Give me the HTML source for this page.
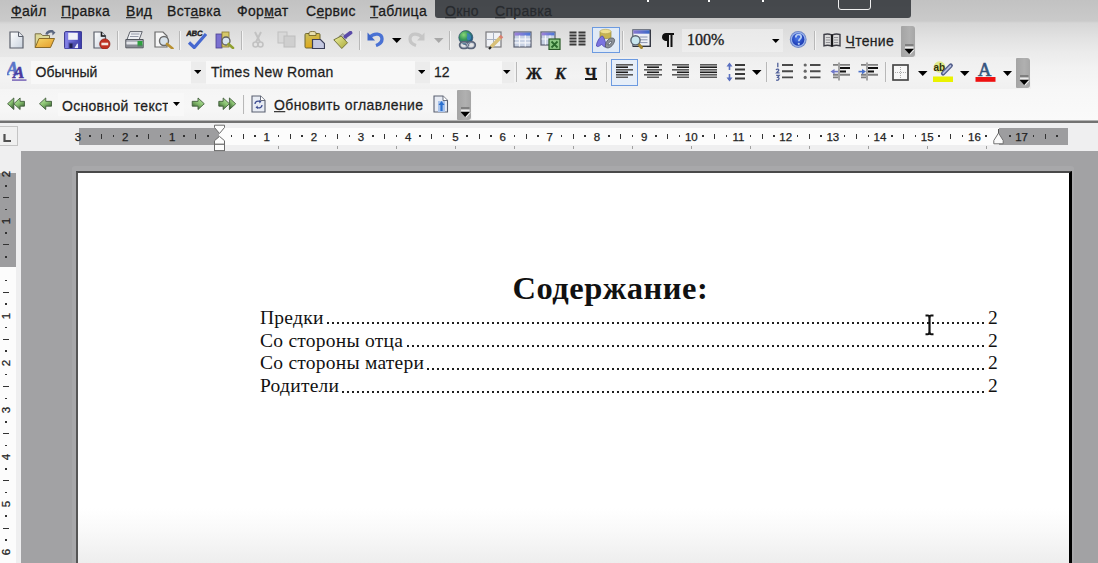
<!DOCTYPE html><html><head><meta charset="utf-8"><style>
*{margin:0;padding:0;box-sizing:border-box}
html,body{width:1098px;height:563px;overflow:hidden;background:#a2a2a4;font-family:"Liberation Sans",sans-serif;position:relative}
.a{position:absolute;display:block}
.t{position:absolute;white-space:nowrap;line-height:1;-webkit-text-stroke:0.25px currentColor;transform:scaleY(1.1);transform-origin:0 1.6px}
.sep{position:absolute;width:2px;border-left:1px solid #b8b8b8;border-right:1px solid #f4f4f4}
.handle{background:linear-gradient(90deg,#a4a4a4,#b0b0b0 60%,#a6a6a6);border-radius:1px 3px 3px 1px}
u{text-decoration:underline;text-underline-offset:1px;text-decoration-thickness:1px}
.rn{position:absolute;top:129px;width:20px;text-align:center;font-size:11.5px;color:#222;-webkit-text-stroke:0.25px #222;line-height:16px}
.rd{position:absolute;top:135px;width:1.5px;height:1.5px;background:#333}
.rt{position:absolute;top:133.5px;width:1px;height:5px;background:#333}
.vn{position:absolute;left:0;width:16px;height:20px;text-align:center;font-size:11.5px;color:#222;-webkit-text-stroke:0.25px #222;line-height:16px;transform:rotate(-90deg)}
.vd{position:absolute;left:5.3px;width:1.5px;height:1.5px;background:#333}
.vt{position:absolute;left:3px;width:6px;height:1px;background:#333}
.doc{position:absolute;font-family:"Liberation Serif",serif;font-size:19.5px;letter-spacing:0.25px;color:#111;white-space:nowrap;line-height:1}
</style></head><body>
<div class="a" style="left:0;top:0;width:1098px;height:121px;background:linear-gradient(#c2c2c2 0px,#cacaca 21px,#d6d6d6 23px,#e2e2e2 38px,#ebebeb 52px,#f2f2f2 68px,#f7f7f7 90px,#fafafa 120px)"></div>
<div class="a" style="left:0;top:24px;width:916px;height:33px;background:linear-gradient(#d9d9d9,#e4e4e4 60%,#e8e8e8)"></div>
<div class="a" style="left:0;top:57px;width:1031px;height:32px;background:linear-gradient(#efefef,#f3f3f3 60%,#f0f0f0)"></div>
<div class="a" style="left:0;top:89px;width:472px;height:31px;background:linear-gradient(#f5f5f5,#f7f7f7 60%,#f3f3f3)"></div>
<span class="t" style="left:11px;top:2.5px;font-size:14px;letter-spacing:0.3px;color:#1a1a1a;"><u>Ф</u>айл</span>
<span class="t" style="left:61px;top:2.5px;font-size:14px;letter-spacing:0.3px;color:#1a1a1a;"><u>П</u>равка</span>
<span class="t" style="left:126px;top:2.5px;font-size:14px;letter-spacing:0.3px;color:#1a1a1a;"><u>В</u>ид</span>
<span class="t" style="left:167px;top:2.5px;font-size:14px;letter-spacing:0.3px;color:#1a1a1a;">Вст<u>а</u>вка</span>
<span class="t" style="left:237px;top:2.5px;font-size:14px;letter-spacing:0.3px;color:#1a1a1a;">Фор<u>м</u>ат</span>
<span class="t" style="left:306px;top:2.5px;font-size:14px;letter-spacing:0.3px;color:#1a1a1a;">С<u>е</u>рвис</span>
<span class="t" style="left:370px;top:2.5px;font-size:14px;letter-spacing:0.3px;color:#1a1a1a;"><u>Т</u>аблица</span>
<span class="t" style="left:445px;top:2.5px;font-size:14px;letter-spacing:0.3px;color:#1a1a1a;"><u>О</u>кно</span>
<span class="t" style="left:495px;top:2.5px;font-size:14px;letter-spacing:0.3px;color:#1a1a1a;"><u>С</u>правка</span>
<div class="a" style="left:435px;top:0;width:476px;height:17.5px;background:rgba(42,45,50,0.82);border-radius:0 0 3px 3px"></div>
<i class="a" style="left:647px;top:0;width:2px;height:2px;background:#fff"></i>
<i class="a" style="left:708px;top:0;width:2px;height:2px;background:#fff"></i>
<i class="a" style="left:762px;top:0;width:2px;height:2px;background:#fff"></i>
<div class="a" style="left:838px;top:-4px;width:33px;height:14px;border:1.5px solid #f0f0f0;border-radius:3px"></div>
<svg class="a" style="left:9px;top:31px" width="15" height="18" viewBox="0 0 15 18"><defs><linearGradient id="gpg" x1="0" y1="0" x2="1" y2="1"><stop offset="0" stop-color="#fff"/><stop offset="1" stop-color="#c9d2de"/></linearGradient></defs><path d="M1 1H9.5L14 5.5V17H1Z" fill="url(#gpg)" stroke="#5a5f6a" stroke-width="1.2"/><path d="M9.5 1V5.5H14" fill="#e8ecf2" stroke="#5a5f6a" stroke-width="1"/></svg>
<svg class="a" style="left:34px;top:30px" width="22" height="19" viewBox="0 0 22 19"><defs><linearGradient id="gfold" x1="0" y1="0" x2="1" y2="1"><stop offset="0" stop-color="#f6d868"/><stop offset="1" stop-color="#e49a28"/></linearGradient></defs><path d="M1.2 3.8H7L8.5 5.5H15.5V17.5H1.2Z" fill="#dcd898" stroke="#7a7048" stroke-width="1"/><path d="M1.2 17.5L5 8.5H20.5L16.5 17.5Z" fill="url(#gfold)" stroke="#8a6a28" stroke-width="1"/><path d="M12.5 4.5C13 2 16 0.6 19 1.6" fill="none" stroke="#5a6680" stroke-width="2.6"/><path d="M18 0L21.5 2.5L18.5 5.5Z" fill="#5a6680"/></svg>
<svg class="a" style="left:63.5px;top:30.5px" width="18.5" height="18.5" viewBox="0 0 18.5 18.5"><defs><linearGradient id="gsave" x1="0" y1="0" x2="1" y2="0"><stop offset="0" stop-color="#8a88ec"/><stop offset="1" stop-color="#3a3aa8"/></linearGradient></defs><rect x="0.6" y="0.6" width="17.3" height="17.3" rx="1.2" fill="url(#gsave)" stroke="#34328a" stroke-width="1"/><rect x="4.2" y="1.8" width="9.6" height="7" fill="#f0f0f8"/><path d="M4.5 11.5H14V18H4.5Z" fill="#5050b0"/><path d="M5.5 12.5H8.5V17H5.5Z" fill="#202050"/><path d="M10.5 17L13 12.8H14V17Z" fill="#e8e8f8"/></svg>
<svg class="a" style="left:93px;top:31px" width="18" height="18" viewBox="0 0 18 18"><path d="M1 1H8.5L12.5 5V17H1Z" fill="url(#gpg)" stroke="#5a5f6a" stroke-width="1.2"/><path d="M8.5 1V5H12.5" fill="#e8ecf2" stroke="#5a5f6a" stroke-width="1"/><path d="M8.5 1V5H12.5" fill="none" stroke="#202020" stroke-width="1.6"/><circle cx="11.8" cy="13" r="5.2" fill="#c03222" stroke="#801a10" stroke-width="0.6"/><rect x="8.4" y="11.7" width="6.8" height="2.6" fill="#f4e8e0"/></svg>
<i class="sep" style="left:117px;top:31px;height:19px"></i>
<svg class="a" style="left:125px;top:31px" width="19" height="18" viewBox="0 0 19 18"><path d="M5 0.6H17.2L14 9H1.8Z" fill="#eef0f4" stroke="#60646c" stroke-width="1"/><path d="M6 3H14.5M5 5.5H13.5" stroke="#8a90a0" stroke-width="0.9"/><path d="M0.8 8.5H18.2V16.8H0.8Z" fill="#a8acb4" stroke="#50545c" stroke-width="1"/><path d="M1.5 10.8H17.5V13.2H1.5Z" fill="#e4e6ea"/><rect x="12.5" y="10" width="5" height="5.5" fill="#2fa040"/><path d="M1.5 15H17.5" stroke="#6a6e76" stroke-width="1"/></svg>
<svg class="a" style="left:154px;top:31px" width="20" height="18" viewBox="0 0 20 18"><path d="M1 1H9L13 5V16H1Z" fill="#f6f6f6" stroke="#6a6a6a" stroke-width="1.2"/><circle cx="10" cy="10" r="4.5" fill="#d8e2ea" stroke="#6a6a6a" stroke-width="1.4"/><path d="M13 13L18.5 17.5" stroke="#b89030" stroke-width="2.6" stroke-linecap="round"/></svg>
<i class="sep" style="left:179px;top:31px;height:19px"></i>
<svg class="a" style="left:186px;top:30px" width="21" height="19" viewBox="0 0 21 19"><text x="0.8" y="6.3" font-family="Liberation Sans" font-weight="bold" font-size="7.8" fill="#1a1a1a" stroke="#1a1a1a" stroke-width="0.35" letter-spacing="-0.2" transform="skewX(-8)">ABC</text><path d="M3 12.5L8.3 17.5L20 4" fill="none" stroke="#4668d0" stroke-width="3.2" stroke-linejoin="round"/></svg>
<svg class="a" style="left:215px;top:31px" width="20" height="18" viewBox="0 0 20 18"><rect x="1" y="3" width="6" height="14" fill="#7a70d0" stroke="#4a4090" stroke-width="0.8"/><rect x="7" y="1" width="7" height="15" fill="#d6c86a" stroke="#8a7a30" stroke-width="0.8"/><circle cx="11" cy="10" r="4" fill="#d8e4f0" stroke="#606060" stroke-width="1.3"/><path d="M13.5 13L18 17" stroke="#90a030" stroke-width="2.6" stroke-linecap="round"/></svg>
<i class="sep" style="left:241px;top:31px;height:19px"></i>
<svg class="a" style="left:252px;top:31px" width="12" height="17" viewBox="0 0 12 17"><path d="M3 1L8 11M9 1L4 11" stroke="#c2c2c2" stroke-width="2"/><circle cx="3.5" cy="13.5" r="2.5" fill="none" stroke="#c2c2c2" stroke-width="1.6"/><circle cx="8.5" cy="13.5" r="2.5" fill="none" stroke="#c2c2c2" stroke-width="1.6"/></svg>
<svg class="a" style="left:277px;top:31px" width="19" height="17" viewBox="0 0 19 17"><rect x="1" y="1" width="9" height="11" fill="#d8d8d8" stroke="#c0c0c0"/><rect x="7" y="5" width="11" height="11" fill="#cfcfcf" stroke="#bdbdbd"/></svg>
<svg class="a" style="left:304px;top:31px" width="21" height="18" viewBox="0 0 21 18"><defs><linearGradient id="gpaste" x1="0" y1="0" x2="0.3" y2="1"><stop offset="0" stop-color="#c8c060"/><stop offset="1" stop-color="#e0a818"/></linearGradient><linearGradient id="gfp" x1="0" y1="0" x2="1" y2="1"><stop offset="0" stop-color="#eef0a0"/><stop offset="1" stop-color="#a8a838"/></linearGradient></defs><rect x="1" y="2.5" width="15" height="14.5" rx="1.2" fill="url(#gpaste)" stroke="#6e6630" stroke-width="1"/><path d="M5 4.5V2C5 1 6 0.5 8.5 0.5C11 0.5 12 1 12 2V4.5Z" fill="#e8e0b0" stroke="#6a5a20" stroke-width="0.8"/><path d="M8.5 8.5H16.5L20.5 12.5V17.5H8.5Z" fill="#c4c8e0" stroke="#3a3e58" stroke-width="1.2"/></svg>
<svg class="a" style="left:333px;top:31px" width="20" height="18" viewBox="0 0 20 18"><path d="M6 5.5L10 2.5L13.8 7.2L9.8 10Z" fill="#b8b8c0" stroke="#707078" stroke-width="0.7"/><path d="M0.8 8.8L8.2 5L14.5 11.8L8.8 17.5Z" fill="url(#gfp)" stroke="#6a6a30" stroke-width="0.9"/><path d="M12.5 5.5L17.5 1.8" stroke="#5a4aa8" stroke-width="3.8" stroke-linecap="round"/></svg>
<i class="sep" style="left:359px;top:31px;height:19px"></i>
<svg class="a" style="left:367px;top:31px" width="17" height="16" viewBox="0 0 17 16"><path d="M2.5 6.5C7 1.5 15 2 15 8C15 11.5 12 13.5 9 14.5" fill="none" stroke="#4a72d4" stroke-width="3.4"/><path d="M0.5 1.5V9.5H8Z" fill="#3e66c8"/></svg>
<svg class="a" style="left:392px;top:38px" width="9.5" height="5" viewBox="0 0 9.5 5"><path d="M0 0H9.5L4.75 5Z" fill="#000"/></svg>
<svg class="a" style="left:408px;top:31px" width="17" height="16" viewBox="0 0 17 16"><path d="M14.5 6.5C10 1.5 2 2 2 8C2 11.5 5 13.5 8 14.5" fill="none" stroke="#c6c6c6" stroke-width="3.2"/><path d="M16.5 1.5V9.5H9Z" fill="#c6c6c6"/></svg>
<svg class="a" style="left:434px;top:38px" width="9.5" height="5" viewBox="0 0 9.5 5"><path d="M0 0H9.5L4.75 5Z" fill="#a8a8a8"/></svg>
<i class="sep" style="left:449px;top:31px;height:19px"></i>
<svg class="a" style="left:457px;top:30px" width="20" height="20" viewBox="0 0 20 20"><defs><radialGradient id="gglobe" cx="0.35" cy="0.3" r="0.75"><stop offset="0" stop-color="#8ad878"/><stop offset="0.45" stop-color="#3a9a58"/><stop offset="1" stop-color="#1a4a90"/></radialGradient></defs><circle cx="8.8" cy="7.6" r="7" fill="url(#gglobe)" stroke="#2a4a6a" stroke-width="0.7"/><path d="M9.5 3C12 2.5 14.5 5 14 8C13.5 10.5 11 11 10 9C9 7 11.5 6 9.5 3Z" fill="#3a80c8" opacity="0.8"/><rect x="2.8" y="12" width="8.5" height="6.2" rx="3.1" fill="none" stroke="#5a6478" stroke-width="2.1"/><rect x="9.6" y="12" width="8.5" height="6.2" rx="3.1" fill="none" stroke="#5a6478" stroke-width="2.1"/><rect x="3.8" y="13" width="6.5" height="4.2" rx="2.1" fill="none" stroke="#c0c8d8" stroke-width="0.7"/><rect x="10.6" y="13" width="6.5" height="4.2" rx="2.1" fill="none" stroke="#c0c8d8" stroke-width="0.7"/></svg>
<svg class="a" style="left:485px;top:31px" width="19" height="19" viewBox="0 0 19 19"><rect x="1" y="1" width="15" height="15" fill="#f0f2f6" stroke="#7a7a7e" stroke-width="1.2"/><path d="M8.5 1V16M1 8.5H16" stroke="#a8b0c0" stroke-width="1"/><path d="M15.5 6.5L6 16" stroke="#d8c078" stroke-width="3.6"/><path d="M15 7L17 5" stroke="#d88070" stroke-width="3.6"/><path d="M6 16L4 18" stroke="#222" stroke-width="2.2"/></svg>
<svg class="a" style="left:513px;top:31px" width="19" height="17" viewBox="0 0 19 17"><defs><linearGradient id="gth" x1="0" x2="1"><stop offset="0" stop-color="#a080d8"/><stop offset="1" stop-color="#4a78d8"/></linearGradient></defs><rect x="1" y="1" width="17" height="15" fill="#c8d2e4" stroke="#5a6070" stroke-width="1.2"/><rect x="1.6" y="1.6" width="15.8" height="3" fill="url(#gth)"/><path d="M1.6 8.2H17.4M1.6 11.8H17.4M6.5 4.6V15.4M12.3 4.6V15.4" stroke="#f4f6fa" stroke-width="1.2"/></svg>
<svg class="a" style="left:540px;top:31px" width="21" height="19" viewBox="0 0 21 19"><rect x="1" y="1" width="14" height="13" fill="#c8d2e4" stroke="#5a6070" stroke-width="1.2"/><rect x="1.6" y="1.6" width="12.8" height="2.8" fill="url(#gth)"/><path d="M1.6 8H14.4M5.5 4.4V13.4M10 4.4V13.4" stroke="#f4f6fa" stroke-width="1.2"/><rect x="9" y="8" width="11" height="10.5" fill="#8cc884" stroke="#285a26" stroke-width="1.2"/><path d="M11.5 10.5L17.5 16.5M17.5 10.5L11.5 16.5" stroke="#2a6a2c" stroke-width="1.8"/></svg>
<svg class="a" style="left:569px;top:31px" width="17" height="16" viewBox="0 0 17 16"><path d="M0.5 1.5H7.5M9.5 1.5H16.5M0.5 4.5H7.5M9.5 4.5H16.5M0.5 7.5H7.5M9.5 7.5H16.5M0.5 10.5H7.5M9.5 10.5H16.5M0.5 13.5H7.5M9.5 13.5H16.5" stroke="#3a3a3a" stroke-width="2"/></svg>
<div class="a" style="left:592px;top:27px;width:28px;height:26px;background:#e0eaf6;border:1px solid #6c9ae0"></div>
<svg class="a" style="left:595px;top:28px" width="23" height="22" viewBox="0 0 23 22"><path d="M5 3.5V9.5C5 11 16 11 16 9.5V3.5" fill="#c8b450" stroke="#9a8a40" stroke-width="0.7"/><ellipse cx="10.5" cy="3.5" rx="5.5" ry="2.2" fill="#efe090" stroke="#b0a050" stroke-width="0.6"/><path d="M1.5 18C1 15 5 8.5 7 8C9 7.5 11 16 11.5 19C9.5 20 7.5 17 6.5 16.5C5 17.5 3 19.5 1.5 18Z" fill="#7a74e0" stroke="#4a44a8" stroke-width="0.8"/><path d="M10.5 19C10 15 13 10 17 10C20.5 10 20 13.5 18 16.5C16 19.5 12.5 21 10.5 19Z M13 17C13 15 15 13 16.5 13.5C17 15 15 17 13 17Z" fill="#8a9098" fill-rule="evenodd" stroke="#50565e" stroke-width="0.8"/></svg>
<i class="sep" style="left:622px;top:31px;height:19px"></i>
<svg class="a" style="left:629px;top:29px" width="23" height="21" viewBox="0 0 23 21"><defs><linearGradient id="gdm" x1="0" x2="1"><stop offset="0" stop-color="#8878d0"/><stop offset="1" stop-color="#3a68c8"/></linearGradient></defs><rect x="3.8" y="0.8" width="17.5" height="16.5" fill="#eef0f6" stroke="#50586a" stroke-width="1.1"/><rect x="4.3" y="1.3" width="16.5" height="3.4" fill="url(#gdm)"/><path d="M11 8H18.5M11 10.8H18.5M11 13.6H18.5" stroke="#8a94b0" stroke-width="1"/><path d="M21.3 1V17.3H4" fill="none" stroke="#30343e" stroke-width="1.2"/><path d="M9 14.5L12.5 18.5" stroke="#a88a30" stroke-width="3" stroke-linecap="round"/><circle cx="6.5" cy="11.3" r="4.6" fill="#c8e6ee" stroke="#5a6470" stroke-width="1.4"/></svg>
<svg class="a" style="left:661px;top:32px" width="14" height="16" viewBox="0 0 14 16"><path d="M5 1H13V3H11.5V15H9.5V3H8V15H6V9C2.5 9 1 7 1 5C1 2.5 3 1 5 1Z" fill="#111"/></svg>
<div class="a" style="left:682px;top:29px;width:101px;height:23px;background:linear-gradient(#e9e9e9,#eeeeee)"></div>
<span class="t" style="left:687px;top:32px;font-size:16px;letter-spacing:0px;color:#1e1e1e;font-family:'Liberation Serif';transform:none;-webkit-text-stroke:0.35px #1e1e1e">100%</span>
<svg class="a" style="left:772px;top:38.5px" width="7.5" height="4" viewBox="0 0 7.5 4"><path d="M0 0H7.5L3.75 4Z" fill="#000"/></svg>
<svg class="a" style="left:789px;top:30px" width="19" height="19" viewBox="0 0 19 19"><defs><radialGradient id="ghelp" cx="0.45" cy="0.4" r="0.6"><stop offset="0" stop-color="#4a78e8"/><stop offset="1" stop-color="#1a38b0"/></radialGradient></defs><circle cx="9.2" cy="9.5" r="8.4" fill="#7088c8"/><circle cx="9.2" cy="9.5" r="7.4" fill="#9ab4ec"/><circle cx="9.2" cy="9.5" r="6.2" fill="url(#ghelp)"/><path d="M6.8 7.4C6.8 5.3 8.2 4.5 9.5 4.5C11.2 4.5 12.2 5.6 12.2 7C12.2 8.8 9.8 9.2 9.8 11.2" fill="none" stroke="#b8d0f4" stroke-width="1.7"/><circle cx="9.8" cy="13.8" r="1.1" fill="#b8d0f4"/></svg>
<i class="sep" style="left:814px;top:31px;height:19px"></i>
<svg class="a" style="left:823px;top:33px" width="18" height="14" viewBox="0 0 18 14"><path d="M1 1.5C3.5 0.8 6 0.8 8.5 1.8V13C6 12 3.5 12 1 12.8Z" fill="#dcdcdc" stroke="#3e3e46" stroke-width="1.4"/><path d="M17 1.5C14.5 0.8 12 0.8 9.5 1.8V13C12 12 14.5 12 17 12.8Z" fill="#dcdcdc" stroke="#3e3e46" stroke-width="1.4"/><path d="M9 1.5V13.5" stroke="#111" stroke-width="1.6"/><path d="M2.8 4.5H7M2.8 7H7M2.8 9.5H7M11 4.5H15.2M11 7H15.2M11 9.5H15.2" stroke="#8a8a90" stroke-width="0.9"/></svg>
<span class="t" style="left:845.5px;top:33px;font-size:14px;letter-spacing:0.3px;color:#1e1e1e;"><u>Ч</u>тение</span>
<div class="a handle" style="left:901px;top:26px;width:14px;height:31px"></div><svg class="a" style="left:904px;top:44px" width="11" height="11" viewBox="0 0 11 11"><path d="M1 1H9.5" stroke="#707070" stroke-width="1.5"/><path d="M1 3.3H9.5" stroke="#f8f8f8" stroke-width="1.1"/><path d="M1.5 5.5H10.8L6.2 10.6Z" fill="#f4f4f4"/><path d="M0.6 5H9.8L5.2 9.9Z" fill="#000"/></svg>
<svg class="a" style="left:7px;top:60px" width="21" height="22" viewBox="0 0 21 22"><text x="-0.5" y="14.5" font-family="Liberation Serif" font-style="italic" font-weight="bold" font-size="18" fill="#5a74c8" stroke="#5a74c8" stroke-width="0.5">A</text><text x="6" y="17.5" font-family="Liberation Serif" font-style="italic" font-weight="bold" font-size="17" fill="#4a3aa0" stroke="#4a3aa0" stroke-width="0.5">A</text><rect x="5" y="19.2" width="14.5" height="1.8" fill="#8a7ac0"/></svg>
<div class="a" style="left:31px;top:61px;width:160px;height:23px;background:#f8f8f8"></div>
<div class="a" style="left:191px;top:62px;width:15px;height:21px;background:#ececec"></div>
<span class="t" style="left:35.5px;top:64px;font-size:14px;letter-spacing:0px;color:#1e1e1e;">Обычный</span>
<svg class="a" style="left:193.5px;top:70px" width="7.5" height="4" viewBox="0 0 7.5 4"><path d="M0 0H7.5L3.75 4Z" fill="#000"/></svg>
<div class="a" style="left:206px;top:61px;width:209px;height:23px;background:#f8f8f8"></div>
<div class="a" style="left:415px;top:62px;width:15px;height:21px;background:#ececec"></div>
<span class="t" style="left:211px;top:64px;font-size:14px;letter-spacing:0.27px;color:#1e1e1e;">Times New Roman</span>
<svg class="a" style="left:417.5px;top:70px" width="7.5" height="4" viewBox="0 0 7.5 4"><path d="M0 0H7.5L3.75 4Z" fill="#000"/></svg>
<div class="a" style="left:430px;top:61px;width:72px;height:23px;background:#f8f8f8"></div>
<div class="a" style="left:502px;top:62px;width:12px;height:21px;background:#ececec"></div>
<span class="t" style="left:434px;top:64px;font-size:14px;letter-spacing:0px;color:#1e1e1e;">12</span>
<svg class="a" style="left:503px;top:70px" width="7.5" height="4" viewBox="0 0 7.5 4"><path d="M0 0H7.5L3.75 4Z" fill="#000"/></svg>
<i class="sep" style="left:516px;top:62px;height:20px"></i>
<span class="t" style="left:526px;top:64.5px;font-size:16px;letter-spacing:0px;color:#1a1a1a;font-family:'Liberation Serif';font-weight:bold">Ж</span>
<span class="t" style="left:555px;top:64.5px;font-size:16px;letter-spacing:0px;color:#1a1a1a;font-family:'Liberation Serif';font-weight:bold;font-style:italic">К</span>
<span class="t" style="left:585px;top:64.5px;font-size:16px;letter-spacing:0px;color:#1a1a1a;font-family:'Liberation Serif';font-weight:bold">Ч</span>
<i class="a" style="left:585px;top:78px;width:12px;height:1.6px;background:#1a1a1a"></i>
<i class="sep" style="left:606px;top:62px;height:20px"></i>
<div class="a" style="left:611px;top:59px;width:27px;height:26.5px;background:#e6eef8;border:1px solid #6c9ae0"></div>
<svg class="a" style="left:615.5px;top:64px" width="17" height="14.1" viewBox="0 0 17 14.1"><rect x="0" y="0" width="17" height="1.6" fill="#5a5a5a"/><rect x="0" y="2.4" width="12" height="1.6" fill="#1e1e1e"/><rect x="0" y="5" width="17" height="1.6" fill="#5a5a5a"/><rect x="0" y="7.5" width="12" height="1.6" fill="#1e1e1e"/><rect x="0" y="10" width="17" height="1.6" fill="#5a5a5a"/><rect x="0" y="12.5" width="12" height="1.6" fill="#5a5a5a"/></svg>
<svg class="a" style="left:643.5px;top:64px" width="18" height="14.1" viewBox="0 0 18 14.1"><rect x="0" y="0" width="18" height="1.6" fill="#5a5a5a"/><rect x="3" y="2.4" width="12" height="1.6" fill="#1e1e1e"/><rect x="0" y="5" width="18" height="1.6" fill="#5a5a5a"/><rect x="3" y="7.5" width="12" height="1.6" fill="#1e1e1e"/><rect x="0" y="10" width="18" height="1.6" fill="#5a5a5a"/><rect x="3" y="12.5" width="12" height="1.6" fill="#5a5a5a"/></svg>
<svg class="a" style="left:671.5px;top:64px" width="17" height="14.1" viewBox="0 0 17 14.1"><rect x="0" y="0" width="17" height="1.6" fill="#5a5a5a"/><rect x="5" y="2.4" width="12" height="1.6" fill="#1e1e1e"/><rect x="0" y="5" width="17" height="1.6" fill="#5a5a5a"/><rect x="5" y="7.5" width="12" height="1.6" fill="#1e1e1e"/><rect x="0" y="10" width="17" height="1.6" fill="#5a5a5a"/><rect x="5" y="12.5" width="12" height="1.6" fill="#5a5a5a"/></svg>
<svg class="a" style="left:699.5px;top:64px" width="17.5" height="14.1" viewBox="0 0 17.5 14.1"><rect x="0" y="0" width="17.5" height="1.6" fill="#5a5a5a"/><rect x="0" y="2.4" width="17.5" height="1.6" fill="#1e1e1e"/><rect x="0" y="5" width="17.5" height="1.6" fill="#5a5a5a"/><rect x="0" y="7.5" width="17.5" height="1.6" fill="#1e1e1e"/><rect x="0" y="10" width="17.5" height="1.6" fill="#5a5a5a"/><rect x="0" y="12.5" width="17.5" height="1.6" fill="#5a5a5a"/></svg>
<svg class="a" style="left:726px;top:62px" width="20" height="20" viewBox="0 0 20 20"><path d="M3.5 2V8M3.5 12V18" stroke="#5a70c0" stroke-width="1.6"/><path d="M0.5 4.5L3.5 0.5L6.5 4.5Z M0.5 15.5L3.5 19.5L6.5 15.5Z" fill="#5a70c0"/><path d="M9 3H19M9 7.5H19M9 12H19M9 16.5H19" stroke="#3a3a3a" stroke-width="1.8"/></svg>
<svg class="a" style="left:752px;top:70px" width="9.5" height="5" viewBox="0 0 9.5 5"><path d="M0 0H9.5L4.75 5Z" fill="#000"/></svg>
<i class="sep" style="left:766px;top:62px;height:20px"></i>
<svg class="a" style="left:775px;top:62px" width="19" height="20" viewBox="0 0 19 20"><path d="M2.8 0.8V5.2M1 8C2 6.5 4.2 7 3.6 8.7L1.6 10.8H4.6M1.2 13.3H4.2L2.7 15.3C4.7 15.3 4.7 18.6 1.2 18.2" fill="none" stroke="#50609a" stroke-width="1.3"/><path d="M7 3H18M7 9.2H18M7 15.4H18" stroke="#4a4a4a" stroke-width="1.9"/></svg>
<svg class="a" style="left:803px;top:62px" width="18" height="20" viewBox="0 0 18 20"><circle cx="2.2" cy="3" r="1.6" fill="#666"/><circle cx="2.2" cy="9.2" r="1.6" fill="#666"/><circle cx="2.2" cy="15.4" r="1.6" fill="#666"/><path d="M7 3H17.5M7 9.2H17.5M7 15.4H17.5" stroke="#4a4a4a" stroke-width="1.9"/></svg>
<svg class="a" style="left:830px;top:62px" width="21" height="19" viewBox="0 0 21 19"><path d="M9 0.5V18.5" stroke="#444" stroke-width="0.9"/><path d="M3 2.8H8M10 2.8H20M3 12.75H8M10 12.75H20M3 15.4H8" stroke="#808080" stroke-width="1.8"/><path d="M10 6H20M10 9.6H16" stroke="#111" stroke-width="2"/><path d="M0.5 9.6L4.5 7V12.2Z" fill="#7078c8"/><path d="M4 9.6H8" stroke="#7078c8" stroke-width="1.6"/></svg>
<svg class="a" style="left:858px;top:62px" width="21" height="19" viewBox="0 0 21 19"><path d="M9 0.5V18.5" stroke="#444" stroke-width="0.9"/><path d="M3 2.8H8M10 2.8H20M3 12.75H8M10 12.75H20M3 15.4H8" stroke="#808080" stroke-width="1.8"/><path d="M10 6H20M10 9.6H16" stroke="#111" stroke-width="2"/><path d="M8 9.6L4 7V12.2Z" fill="#4a70c8"/><path d="M0.5 9.6H5" stroke="#4a70c8" stroke-width="1.6"/></svg>
<i class="sep" style="left:885px;top:62px;height:20px"></i>
<svg class="a" style="left:892px;top:64px" width="17" height="17" viewBox="0 0 17 17"><rect x="1" y="1" width="15" height="15" fill="#f8f8f8" stroke="#484848" stroke-width="1.7"/><path d="M8.5 3V14M3 8.5H14" stroke="#a0a0a0" stroke-width="0.9" stroke-dasharray="1 1"/></svg>
<svg class="a" style="left:918px;top:70.5px" width="9.5" height="5" viewBox="0 0 9.5 5"><path d="M0 0H9.5L4.75 5Z" fill="#000"/></svg>
<svg class="a" style="left:932px;top:61px" width="22" height="22" viewBox="0 0 22 22"><circle cx="7.5" cy="6" r="5.8" fill="#dce878" opacity="0.85"/><text x="1.5" y="10" font-family="Liberation Sans" font-weight="bold" font-size="10" fill="#30300a">ab</text><path d="M11 12.5L18.8 4.5" stroke="#505c88" stroke-width="4.2" stroke-linecap="round"/><path d="M11.3 12.2L18.5 4.8" stroke="#b4bce0" stroke-width="1.8" stroke-linecap="round"/><rect x="1" y="15.5" width="20" height="5.5" fill="#eaf200"/></svg>
<svg class="a" style="left:960px;top:70.5px" width="9.5" height="5" viewBox="0 0 9.5 5"><path d="M0 0H9.5L4.75 5Z" fill="#000"/></svg>
<svg class="a" style="left:975px;top:61px" width="21" height="21" viewBox="0 0 21 21"><defs><linearGradient id="gfa" x1="0" y1="0" x2="0" y2="1"><stop offset="0" stop-color="#3a4e88"/><stop offset="1" stop-color="#2a6a78"/></linearGradient></defs><text x="3" y="14.5" font-family="Liberation Serif" font-size="18.5" fill="url(#gfa)" stroke="#34507a" stroke-width="0.6">A</text><rect x="0.5" y="16" width="20" height="4.8" fill="#ee1010"/></svg>
<svg class="a" style="left:1002.5px;top:70.5px" width="9" height="5" viewBox="0 0 9 5"><path d="M0 0H9L4.5 5Z" fill="#000"/></svg>
<div class="a handle" style="left:1016px;top:58px;width:14px;height:30px"></div><svg class="a" style="left:1019px;top:75px" width="11" height="11" viewBox="0 0 11 11"><path d="M1 1H9.5" stroke="#707070" stroke-width="1.5"/><path d="M1 3.3H9.5" stroke="#f8f8f8" stroke-width="1.1"/><path d="M1.5 5.5H10.8L6.2 10.6Z" fill="#f4f4f4"/><path d="M0.6 5H9.8L5.2 9.9Z" fill="#000"/></svg>
<svg class="a" style="left:7px;top:97px" width="18.5" height="13.5" viewBox="0 0 19 14"><defs><linearGradient id="gar1" x1="0" y1="0" x2="0.7" y2="1"><stop offset="0" stop-color="#c8f0b0"/><stop offset="0.55" stop-color="#88c070"/><stop offset="1" stop-color="#3a6234"/></linearGradient></defs><g><path d="M0.5 7L7 1V13Z" fill="url(#gar1)" stroke="#3e5a38" stroke-width="0.9"/><path d="M7 7L13.5 1V4.5H18V9.5H13.5V13Z" fill="url(#gar1)" stroke="#3e5a38" stroke-width="0.9"/></g></svg>
<svg class="a" style="left:38.5px;top:96.5px" width="13.5" height="13.5" viewBox="0 0 14 14"><defs><linearGradient id="gar2" x1="0" y1="0" x2="0.7" y2="1"><stop offset="0" stop-color="#c8f0b0"/><stop offset="0.55" stop-color="#88c070"/><stop offset="1" stop-color="#3a6234"/></linearGradient></defs><g><path d="M0.5 7L7 1V4.5H13V9.5H7V13Z" fill="url(#gar2)" stroke="#3e5a38" stroke-width="0.9"/></g></svg>
<div class="a" style="left:58px;top:93px;width:126px;height:23px;background:#f8f8f8"></div>
<div class="a" style="left:59px;top:94px;width:109px;height:21px;overflow:hidden"><span class="t" style="left:3px;top:4px;font-size:14px;color:#1e1e1e;letter-spacing:0.3px;word-spacing:1px">Основной текст</span></div>
<svg class="a" style="left:173px;top:102px" width="7" height="4" viewBox="0 0 7 4"><path d="M0 0H7L3.5 4Z" fill="#000"/></svg>
<svg class="a" style="left:191px;top:96.5px" width="14" height="13.5" viewBox="0 0 14 14"><defs><linearGradient id="gar3" x1="0" y1="0" x2="0.7" y2="1"><stop offset="0" stop-color="#c8f0b0"/><stop offset="0.55" stop-color="#88c070"/><stop offset="1" stop-color="#3a6234"/></linearGradient></defs><g transform="translate(14,0) scale(-1,1)"><path d="M0.5 7L7 1V4.5H13V9.5H7V13Z" fill="url(#gar3)" stroke="#3e5a38" stroke-width="0.9"/></g></svg>
<svg class="a" style="left:216.5px;top:96.5px" width="20" height="13.5" viewBox="0 0 19 14"><defs><linearGradient id="gar4" x1="0" y1="0" x2="0.7" y2="1"><stop offset="0" stop-color="#c8f0b0"/><stop offset="0.55" stop-color="#88c070"/><stop offset="1" stop-color="#3a6234"/></linearGradient></defs><g transform="translate(19,0) scale(-1,1)"><path d="M0.5 7L7 1V13Z" fill="url(#gar4)" stroke="#3e5a38" stroke-width="0.9"/><path d="M7 7L13.5 1V4.5H18V9.5H13.5V13Z" fill="url(#gar4)" stroke="#3e5a38" stroke-width="0.9"/></g></svg>
<i class="sep" style="left:243px;top:95px;height:19px"></i>
<svg class="a" style="left:251px;top:95px" width="15" height="18" viewBox="0 0 15 18"><path d="M1 1H9.5L14 5.5V17H1Z" fill="#e8ecf4" stroke="#5a6070" stroke-width="1.1"/><path d="M9.5 1V5.5H14" fill="#fff" stroke="#5a6070" stroke-width="0.9"/><path d="M4 9C4 6.5 7 5.5 9 6.5M11 10C11 12.5 8 13.5 6 12.5" fill="none" stroke="#3a4a90" stroke-width="1.3"/><path d="M8 5L10.5 6.5L8.5 8.5ZM7 14L4.5 12.5L6.5 10.5Z" fill="#3a4a90"/></svg>
<span class="t" style="left:274px;top:97px;font-size:14px;letter-spacing:0.38px;color:#1e1e1e;"><u>О</u>бновить оглавление</span>
<svg class="a" style="left:433px;top:95px" width="16" height="18" viewBox="0 0 16 18"><path d="M1 1H10L14.5 5.5V17H1Z" fill="#e8ecf4" stroke="#5a6070" stroke-width="1.1"/><path d="M10 1V5.5H14.5" fill="#fff" stroke="#5a6070" stroke-width="0.9"/><path d="M5 6H12V17H5Z" fill="#aac4ec"/><path d="M8.5 16V9" stroke="#2a70d0" stroke-width="2.2"/><path d="M5.5 10L8.5 6L11.5 10Z" fill="#2a70d0"/></svg>
<div class="a handle" style="left:457px;top:90px;width:14px;height:30px"></div><svg class="a" style="left:460px;top:107px" width="11" height="11" viewBox="0 0 11 11"><path d="M1 1H9.5" stroke="#707070" stroke-width="1.5"/><path d="M1 3.3H9.5" stroke="#f8f8f8" stroke-width="1.1"/><path d="M1.5 5.5H10.8L6.2 10.6Z" fill="#f4f4f4"/><path d="M0.6 5H9.8L5.2 9.9Z" fill="#000"/></svg>
<div class="a" style="left:0;top:120px;width:1098px;height:1px;background:#b4b4b4"></div>
<div class="a" style="left:0;top:121px;width:1098px;height:2px;background:#727272"></div>
<div class="a" style="left:0;top:123px;width:1098px;height:28px;background:#efeff0"></div>
<div class="a" style="left:0;top:126px;width:18px;height:20px;border:1.5px solid #c4c4c4;border-left:none;background:#f0f0f0"></div>
<svg class="a" style="left:3px;top:133.5px" width="9" height="9" viewBox="0 0 9 9"><path d="M1.5 0V7H8" fill="none" stroke="#505050" stroke-width="2.2"/></svg>
<div class="a" style="left:79px;top:128px;width:988px;height:17px;background:#fcfcfc"></div>
<div class="a" style="left:79px;top:128px;width:140px;height:17px;background:#9d9d9f"></div>
<div class="a" style="left:999px;top:128px;width:69px;height:17px;background:#9d9d9f"></div>
<span class="rn" style="left:68.0px">3</span>
<i class="rd" style="left:89.0px"></i>
<i class="rt" style="left:101.1px"></i>
<i class="rd" style="left:112.6px"></i>
<span class="rn" style="left:115.1px">2</span>
<i class="rd" style="left:136.2px"></i>
<i class="rt" style="left:148.2px"></i>
<i class="rd" style="left:159.8px"></i>
<span class="rn" style="left:162.3px">1</span>
<i class="rd" style="left:183.4px"></i>
<i class="rt" style="left:195.4px"></i>
<i class="rd" style="left:207.0px"></i>
<i class="rd" style="left:230.5px"></i>
<i class="rt" style="left:242.6px"></i>
<i class="rd" style="left:254.1px"></i>
<span class="rn" style="left:256.7px">1</span>
<i class="rd" style="left:277.7px"></i>
<i class="rt" style="left:289.8px"></i>
<i class="rd" style="left:301.3px"></i>
<span class="rn" style="left:303.9px">2</span>
<i class="rd" style="left:324.9px"></i>
<i class="rt" style="left:336.9px"></i>
<i class="rd" style="left:348.5px"></i>
<span class="rn" style="left:351.0px">3</span>
<i class="rd" style="left:372.1px"></i>
<i class="rt" style="left:384.1px"></i>
<i class="rd" style="left:395.7px"></i>
<span class="rn" style="left:398.2px">4</span>
<i class="rd" style="left:419.3px"></i>
<i class="rt" style="left:431.3px"></i>
<i class="rd" style="left:442.9px"></i>
<span class="rn" style="left:445.4px">5</span>
<i class="rd" style="left:466.4px"></i>
<i class="rt" style="left:478.5px"></i>
<i class="rd" style="left:490.0px"></i>
<span class="rn" style="left:492.6px">6</span>
<i class="rd" style="left:513.6px"></i>
<i class="rt" style="left:525.7px"></i>
<i class="rd" style="left:537.2px"></i>
<span class="rn" style="left:539.8px">7</span>
<i class="rd" style="left:560.8px"></i>
<i class="rt" style="left:572.9px"></i>
<i class="rd" style="left:584.4px"></i>
<span class="rn" style="left:586.9px">8</span>
<i class="rd" style="left:608.0px"></i>
<i class="rt" style="left:620.0px"></i>
<i class="rd" style="left:631.6px"></i>
<span class="rn" style="left:634.1px">9</span>
<i class="rd" style="left:655.2px"></i>
<i class="rt" style="left:667.2px"></i>
<i class="rd" style="left:678.8px"></i>
<span class="rn" style="left:681.3px">10</span>
<i class="rd" style="left:702.3px"></i>
<i class="rt" style="left:714.4px"></i>
<i class="rd" style="left:725.9px"></i>
<span class="rn" style="left:728.5px">11</span>
<i class="rd" style="left:749.5px"></i>
<i class="rt" style="left:761.6px"></i>
<i class="rd" style="left:773.1px"></i>
<span class="rn" style="left:775.7px">12</span>
<i class="rd" style="left:796.7px"></i>
<i class="rt" style="left:808.8px"></i>
<i class="rd" style="left:820.3px"></i>
<span class="rn" style="left:822.8px">13</span>
<i class="rd" style="left:843.9px"></i>
<i class="rt" style="left:855.9px"></i>
<i class="rd" style="left:867.5px"></i>
<span class="rn" style="left:870.0px">14</span>
<i class="rd" style="left:891.1px"></i>
<i class="rt" style="left:903.1px"></i>
<i class="rd" style="left:914.7px"></i>
<span class="rn" style="left:917.2px">15</span>
<i class="rd" style="left:938.2px"></i>
<i class="rt" style="left:950.3px"></i>
<i class="rd" style="left:961.8px"></i>
<span class="rn" style="left:964.4px">16</span>
<i class="rd" style="left:985.4px"></i>
<i class="rd" style="left:1009.0px"></i>
<span class="rn" style="left:1011.6px">17</span>
<i class="rd" style="left:1032.6px"></i>
<i class="rt" style="left:1044.6px"></i>
<i class="rd" style="left:1056.2px"></i>
<i class="a" style="left:278.0px;top:146px;width:1px;height:3px;background:#a0a0a0"></i>
<i class="a" style="left:336.9px;top:146px;width:1px;height:3px;background:#a0a0a0"></i>
<i class="a" style="left:395.9px;top:146px;width:1px;height:3px;background:#a0a0a0"></i>
<i class="a" style="left:454.9px;top:146px;width:1px;height:3px;background:#a0a0a0"></i>
<i class="a" style="left:513.9px;top:146px;width:1px;height:3px;background:#a0a0a0"></i>
<i class="a" style="left:572.9px;top:146px;width:1px;height:3px;background:#a0a0a0"></i>
<i class="a" style="left:631.8px;top:146px;width:1px;height:3px;background:#a0a0a0"></i>
<i class="a" style="left:690.8px;top:146px;width:1px;height:3px;background:#a0a0a0"></i>
<i class="a" style="left:749.8px;top:146px;width:1px;height:3px;background:#a0a0a0"></i>
<i class="a" style="left:808.8px;top:146px;width:1px;height:3px;background:#a0a0a0"></i>
<i class="a" style="left:867.7px;top:146px;width:1px;height:3px;background:#a0a0a0"></i>
<i class="a" style="left:926.7px;top:146px;width:1px;height:3px;background:#a0a0a0"></i>
<i class="a" style="left:985.7px;top:146px;width:1px;height:3px;background:#a0a0a0"></i>
<svg class="a" style="left:213px;top:124px" width="13" height="28" viewBox="0 0 13 28"><path d="M1.5 1.2H11.5V3.5L6.5 9.5L1.5 3.5Z" fill="#fcfcfc" stroke="#6a6a6a" stroke-width="1"/><path d="M6.5 12.4L11.5 16.7V20.3H1.5V16.7Z" fill="#fcfcfc" stroke="#6a6a6a" stroke-width="1"/><rect x="1.5" y="20.3" width="10" height="6.3" fill="#fcfcfc" stroke="#6a6a6a" stroke-width="1"/></svg>
<svg class="a" style="left:991.5px;top:128px" width="12" height="18" viewBox="0 0 12 18"><path d="M6.5 1V5" stroke="#555" stroke-width="1"/><path d="M6.5 5L11.2 12.5V15.8H1.8V12.5Z" fill="#fafafa" stroke="#707070" stroke-width="1"/></svg>
<div class="a" style="left:0;top:151px;width:21px;height:412px;background:#efeff0"></div>
<div class="a" style="left:0;top:173px;width:16px;height:390px;background:#fcfcfc"></div>
<div class="a" style="left:0;top:173px;width:16px;height:94px;background:#9d9d9f"></div>
<span class="vn" style="top:164.1px">2</span>
<i class="vd" style="top:185.2px"></i>
<i class="vt" style="top:197.2px"></i>
<i class="vd" style="top:208.8px"></i>
<span class="vn" style="top:211.3px">1</span>
<i class="vd" style="top:232.4px"></i>
<i class="vt" style="top:244.4px"></i>
<i class="vd" style="top:256.0px"></i>
<i class="vd" style="top:279.5px"></i>
<i class="vt" style="top:291.6px"></i>
<i class="vd" style="top:303.1px"></i>
<span class="vn" style="top:305.7px">1</span>
<i class="vd" style="top:326.7px"></i>
<i class="vt" style="top:338.8px"></i>
<i class="vd" style="top:350.3px"></i>
<span class="vn" style="top:352.9px">2</span>
<i class="vd" style="top:373.9px"></i>
<i class="vt" style="top:385.9px"></i>
<i class="vd" style="top:397.5px"></i>
<span class="vn" style="top:400.0px">3</span>
<i class="vd" style="top:421.1px"></i>
<i class="vt" style="top:433.1px"></i>
<i class="vd" style="top:444.7px"></i>
<span class="vn" style="top:447.2px">4</span>
<i class="vd" style="top:468.3px"></i>
<i class="vt" style="top:480.3px"></i>
<i class="vd" style="top:491.9px"></i>
<span class="vn" style="top:494.4px">5</span>
<i class="vd" style="top:515.4px"></i>
<i class="vt" style="top:527.5px"></i>
<i class="vd" style="top:539.0px"></i>
<span class="vn" style="top:541.6px">6</span>
<div class="a" style="left:72px;top:166px;width:1002px;height:397px;background:#a8a8aa;border-radius:3px 3px 0 0"></div>
<div class="a" style="left:76px;top:171px;width:996px;height:396px;background:linear-gradient(#fff 0,#fff 335px,#f9f9f9 358px,#f2f2f2 378px,#ededed 392px);border-top:2px solid #4a4a4a;border-left:2px solid #555;border-right:3px solid #000"></div>
<div class="doc" style="left:512.5px;top:271.5px;font-size:32.5px;font-weight:bold;letter-spacing:0.5px">Содержание:</div>
<div class="doc" style="left:260px;top:307.9px">Предки</div>
<div class="doc" style="left:988px;top:307.9px">2</div>
<i class="a" style="left:326px;top:322px;width:658px;height:2px;background:linear-gradient(90deg,transparent 3px,#1e1e1e 3px) right top/5px 2px repeat-x"></i>
<div class="doc" style="left:260px;top:330.67px">Со стороны отца</div>
<div class="doc" style="left:988px;top:330.67px">2</div>
<i class="a" style="left:405px;top:345px;width:579px;height:2px;background:linear-gradient(90deg,transparent 3px,#1e1e1e 3px) right top/5px 2px repeat-x"></i>
<div class="doc" style="left:260px;top:353.44px">Со стороны матери</div>
<div class="doc" style="left:988px;top:353.44px">2</div>
<i class="a" style="left:426px;top:368px;width:558px;height:2px;background:linear-gradient(90deg,transparent 3px,#1e1e1e 3px) right top/5px 2px repeat-x"></i>
<div class="doc" style="left:260px;top:376.2px">Родители</div>
<div class="doc" style="left:988px;top:376.2px">2</div>
<i class="a" style="left:341px;top:391px;width:643px;height:2px;background:linear-gradient(90deg,transparent 3px,#1e1e1e 3px) right top/5px 2px repeat-x"></i>
<svg class="a" style="left:924px;top:313px" width="11" height="24" viewBox="0 0 11 24"><path d="M1.5 2.5H3.8C4.8 2.5 5.5 3.2 5.5 4.5C5.5 3.2 6.2 2.5 7.2 2.5H9.5M1.5 21.3H3.8C4.8 21.3 5.5 20.6 5.5 19.3C5.5 20.6 6.2 21.3 7.2 21.3H9.5" fill="none" stroke="#111" stroke-width="2"/><rect x="4.4" y="4" width="2.2" height="16" fill="#111"/></svg>
</body></html>
